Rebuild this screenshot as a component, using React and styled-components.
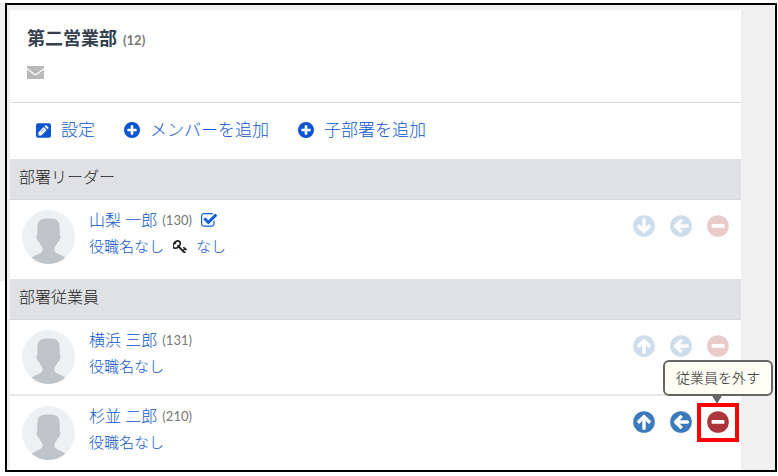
import styled, { createGlobalStyle, css } from "styled-components"

const members = [
  { id: 130, name: "山梨 一郎", role: "役職名なし", grant: "なし", checked: true, first: "down" },
]

const staff = [
  { id: 131, name: "横浜 三郎", role: "役職名なし", first: "up" },
  { id: 210, name: "杉並 二郎", role: "役職名なし", first: "up", active: true },
]

const arrowAngles = { up: 0, down: 180, left: 270 }

const ArrowCircle = ({ direction }) => (
  <svg viewBox="0 0 22 22" width="22" height="22" aria-hidden="true">
    <circle cx="11" cy="11" r="10.8" fill="currentColor" />
    <g
      transform={`rotate(${arrowAngles[direction]} 11 11)`}
      fill="none"
      stroke="#fff"
      strokeWidth="3.4"
    >
      <path d="M4.9 11.7 11 5.6l6.1 6.1" strokeLinejoin="round" />
      <path d="M11 6v11.4" strokeLinecap="round" />
    </g>
  </svg>
)

const MinusCircle = () => (
  <svg viewBox="0 0 22 22" width="22" height="22" aria-hidden="true">
    <circle cx="11" cy="11" r="10.8" fill="currentColor" />
    <rect x="4.6" y="9" width="12.8" height="3.8" rx="0.9" fill="#fff" />
  </svg>
)

const PlusIcon = () => (
  <svg viewBox="128 128 1536 1536" width="16" height="16" fill="currentColor" aria-hidden="true">
    <path d="M1344 960v-128q0-26-19-45t-45-19h-256v-256q0-26-19-45t-45-19h-128q-26 0-45 19t-19 45v256h-256q-26 0-45 19t-19 45v128q0 26 19 45t45 19h256v256q0 26 19 45t45 19h128q26 0 45-19t19-45v-256h256q26 0 45-19t19-45zm320-64q0 209-103 385.5t-279.5 279.5-385.5 103-385.5-103-279.5-279.5-103-385.5 103-385.5 279.5-279.5 385.5-103 385.5 103 279.5 279.5 103 385.5z" />
  </svg>
)

const EditIcon = () => (
  <svg viewBox="0 0 15 15" width="15" height="15" aria-hidden="true">
    <rect width="15" height="14.4" y="0.3" rx="2" fill="currentColor" />
    <path d="M2.4 12.4V9.4l5.3-5.3 3 3-5.3 5.3z" fill="#fff" />
    <path d="m8.5 3.3.8-.8q.6-.5 1.2 0l1.8 1.8q.5.6 0 1.2l-.8.8z" fill="#fff" />
    <path d="m5.2 9.1 2.9-2.9" stroke="currentColor" strokeWidth="0.7" />
  </svg>
)

const MailIcon = () => (
  <svg viewBox="0 0 17 13" width="17" height="13" aria-hidden="true">
    <rect width="17" height="13" rx="0.8" fill="#b9b9b9" />
    <path d="m0 2.8 7 5.3q1.5 1 3 0l7-5.3" fill="none" stroke="#fff" strokeWidth="1.2" />
  </svg>
)

const CheckIcon = () => (
  <svg viewBox="64 128 1664 1536" width="16" height="15" fill="#1160d8" aria-hidden="true">
    <path d="M1472 930v318q0 119-84.5 203.5t-203.5 84.5h-832q-119 0-203.5-84.5t-84.5-203.5v-832q0-119 84.5-203.5t203.5-84.5h832q63 0 117 25 15 7 18 23 3 17-9 29l-49 49q-10 10-23 10-3 0-9-2-23-6-45-6h-832q-66 0-113 47t-47 113v832q0 66 47 113t113 47h832q66 0 113-47t47-113v-254q0-13 9-22l64-64q10-10 23-10 6 0 12 3 20 8 20 29zm231-489l-814 814q-24 24-57 24t-57-24l-430-430q-24-24-24-57t24-57l110-110q24-24 57-24t57 24l263 263 647-647q24-24 57-24t57 24l110 110q24 24 24 57t-24 57z" />
  </svg>
)

const KeyIcon = () => (
  <svg viewBox="96 0 1600 1600" width="14" height="14" fill="#222" aria-hidden="true">
    <path d="M832 512q0-80-56-136t-136-56-136 56-56 136q0 42 19 83-41-19-83-19-80 0-136 56t-56 136 56 136 136 56 136-56 56-136q0-42-19-83 41 19 83 19 80 0 136-56t56-136zm851 704q0 17-49 66t-66 49q-9 0-28.5-16t-36.5-33-38.5-40-24.5-26l-96 96 220 220q28 28 28 68 0 42-39 81t-81 39q-40 0-68-28l-671-671q-176 131-365 131-163 0-265.5-102.5t-102.5-265.5q0-160 95-313t248-248 313-95q163 0 265.5 102.5t102.5 265.5q0 189-131 365l355 355 96-96q-3-3-26-24.5t-40-38.5-33-36.5-16-28.5q0-17 49-66t66-49q13 0 23 10 6 6 46 44.5t82 79.5 86.5 86 73 78 28.5 41z" />
  </svg>
)

const Avatar = () => (
  <svg viewBox="0 0 160 164" width="53" height="54" aria-hidden="true">
    <ellipse cx="80" cy="82" rx="80" ry="82" fill="#edf1f4" />
    <path
      d="M46 76V52q0-25 24-26h20q24 1 24 26v24q4 2 2 10-2 10-8 12-4 10-9 15-3 8 1 14 4 5 14 8 10 4 17 10-22 19-51 19t-51-19q7-6 17-10 10-3 14-8 4-6 1-14-5-5-9-15-6-2-8-12-2-8 2-10z"
      fill="#bfc4ca"
    />
  </svg>
)

const MemberRow = ({ member, tall }) => (
  <Row $tall={tall}>
    <Avatar />
    <Info>
      <Line>
        <NameLink href="#">{member.name}</NameLink>
        <Count>({member.id})</Count>
        {member.checked && <CheckIcon />}
      </Line>
      <Line $wide>
        <RoleLink href="#">{member.role}</RoleLink>
        {member.grant && (
          <>
            <KeyIcon />
            <RoleLink href="#">{member.grant}</RoleLink>
          </>
        )}
      </Line>
    </Info>
    <Actions>
      <ActionButton $active={member.active} aria-label={member.first}>
        <ArrowCircle direction={member.first} />
      </ActionButton>
      <ActionButton $active={member.active} aria-label="left">
        <ArrowCircle direction="left" />
      </ActionButton>
      <RemoveWrap>
        <ActionButton $danger $active={member.active} aria-label="従業員を外す">
          <MinusCircle />
        </ActionButton>
        {member.active && (
          <>
            <Tooltip role="tooltip">従業員を外す</Tooltip>
            <Highlight />
          </>
        )}
      </RemoveWrap>
    </Actions>
  </Row>
)

const App = () => {
  return (
    <>
      <GlobalStyle />
      <Frame>
        <Panel>
          <Header>
            <Title>
              第二営業部
              <Count>(12)</Count>
            </Title>
            <MailLink href="#" aria-label="メール">
              <MailIcon />
            </MailLink>
          </Header>
          <Toolbar>
            <ToolLink href="#">
              <EditIcon />
              設定
            </ToolLink>
            <ToolLink href="#">
              <PlusIcon />
              メンバーを追加
            </ToolLink>
            <ToolLink href="#">
              <PlusIcon />
              子部署を追加
            </ToolLink>
          </Toolbar>
          <SectionTitle>部署リーダー</SectionTitle>
          <List>
            {members.map((m) => (
              <MemberRow key={m.id} member={m} tall />
            ))}
          </List>
          <SectionTitle>部署従業員</SectionTitle>
          <List>
            {staff.map((m) => (
              <MemberRow key={m.id} member={m} />
            ))}
          </List>
        </Panel>
      </Frame>
    </>
  )
}

export default App

const GlobalStyle = createGlobalStyle`
  * {
    box-sizing: border-box;
  }

  body {
    margin: 0;
    padding: 3px 1px 3px 5px;
    background: #fff linear-gradient(#f0f0f0, #f0f0f0) no-repeat 0 3px / 5px 278px;
    font-family: Lato, "Noto Sans CJK JP", sans-serif;
    font-weight: 300;
    color: #222;
  }

  a {
    color: #0b56d0;
    text-decoration: none;
  }

  svg {
    display: block;
    flex-shrink: 0;
  }
`

const Frame = styled.main`
  padding: 5px 34px 0 3px;
  border: 2px solid #000;
  background: #f0f0f0;
`

const Panel = styled.section`
  background: #fff;
`

const Header = styled.header`
  padding: 15px 17px 23px;
  border-bottom: 1px solid #d8d9db;
`

const Count = styled.span`
  font-size: 13px;
  font-weight: 400;
  color: #777;
`

const Title = styled.h1`
  display: flex;
  align-items: center;
  gap: 6px;
  height: 26px;
  margin: 0 0 15px;
  font-size: 18px;
  line-height: 26px;
  font-weight: 700;
  color: #343f4f;

  ${Count} {
    padding-top: 4px;
    font-weight: 700;
  }
`

const MailLink = styled.a`
  display: flex;
  width: 17px;
`

const Toolbar = styled.nav`
  display: flex;
  gap: 29px;
  padding: 15px 26px 17px;
`

const ToolLink = styled.a`
  display: flex;
  align-items: center;
  gap: 10px;
  font-size: 17px;
  line-height: 24px;
`

const SectionTitle = styled.h2`
  margin: 0;
  padding: 5px 9px 9px;
  border-bottom: 1px solid #d5d7da;
  background: #dfe1e5;
  font-size: 16px;
  line-height: 26px;
  font-weight: 300;
`

const List = styled.ul`
  margin: 0;
  padding: 0;
  list-style: none;
`

const Row = styled.li`
  display: flex;
  align-items: flex-start;
  padding: 10px 12px ${({ $tall }) => ($tall ? "15px" : "10px")};

  & + & {
    border-top: 2px solid #e8e8e9;
  }
`

const Info = styled.div`
  flex: 1;
  margin: -3px 0 0 14px;
`

const Line = styled.div`
  display: flex;
  align-items: center;
  gap: ${({ $wide }) => ($wide ? "9px" : "5px")};
  height: 26px;
  line-height: 26px;

  ${Count} + svg {
    margin-left: 4px;
  }
`

const NameLink = styled.a`
  font-size: 16px;
`

const RoleLink = styled.a`
  font-size: 15px;
`

const Actions = styled.div`
  display: flex;
  gap: 15px;
  padding-top: 5px;
`

const ActionButton = styled.button`
  display: block;
  padding: 0;
  border: none;
  border-radius: 50%;
  background: none;
  color: ${({ $danger }) => ($danger ? "#aa353a" : "#3d7abb")};
  cursor: pointer;

  ${({ $active }) =>
    !$active &&
    css`
      opacity: 0.25;
    `}
`

const RemoveWrap = styled.div`
  position: relative;
`

const Highlight = styled.span`
  position: absolute;
  inset: -8px -10px -9px;
  border: 4px solid #ff0000;
  pointer-events: none;
`

const Tooltip = styled.span`
  position: absolute;
  right: -44px;
  bottom: 37px;
  padding: 3px 11px;
  border: 2px solid #666;
  border-radius: 6px;
  background: #fffff6;
  font-size: 14px;
  line-height: 26px;
  white-space: nowrap;

  &::after {
    content: "";
    position: absolute;
    top: 100%;
    left: 46px;
    border: 6px solid transparent;
    border-top: 10px solid #666;
    border-bottom: none;
  }
`
